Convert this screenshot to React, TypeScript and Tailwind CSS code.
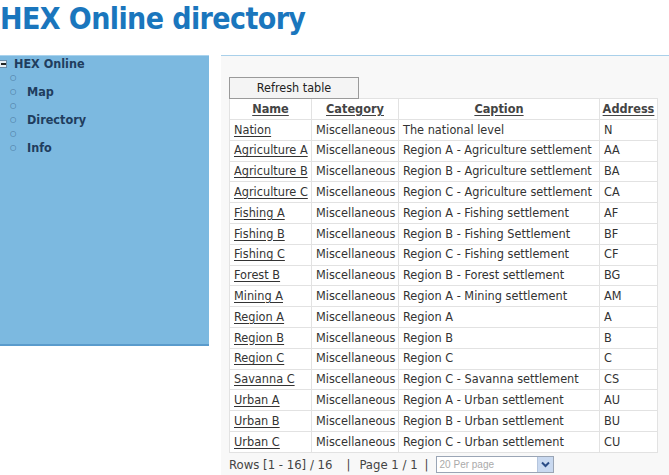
import React from "react";

const rows: [string, string, string][] = [
  ["Nation", "The national level", "N"],
  ["Agriculture A", "Region A - Agriculture settlement", "AA"],
  ["Agriculture B", "Region B - Agriculture settlement", "BA"],
  ["Agriculture C", "Region C - Agriculture settlement", "CA"],
  ["Fishing A", "Region A - Fishing settlement", "AF"],
  ["Fishing B", "Region B - Fishing Settlement", "BF"],
  ["Fishing C", "Region C - Fishing settlement", "CF"],
  ["Forest B", "Region B - Forest settlement", "BG"],
  ["Mining A", "Region A - Mining settlement", "AM"],
  ["Region A", "Region A", "A"],
  ["Region B", "Region B", "B"],
  ["Region C", "Region C", "C"],
  ["Savanna C", "Region C - Savanna settlement", "CS"],
  ["Urban A", "Region A - Urban settlement", "AU"],
  ["Urban B", "Region B - Urban settlement", "BU"],
  ["Urban C", "Region C - Urban settlement", "CU"],
];

function Bullet({ label }: { label?: string }) {
  return (
    <div className="flex items-center h-[14px]">
      <span className="w-[14px] ml-[10px] text-[8px] text-[#3d6a8f] leading-none">○</span>
      {label ? <span className="ml-[3px] text-[12.5px] font-bold text-[#1f3d5e]">{label}</span> : null}
    </div>
  );
}

export default function App() {
  return (
    <div className="w-[669px] h-[475px] bg-white overflow-hidden font-['DejaVu_Sans_Condensed','DejaVu_Sans',sans-serif] text-[#333]">
      <h1 className="h-[55px] pt-[4px] text-[30px] leading-[30px] font-bold text-[#1a76bd] tracking-[-0.6px]">
        HEX Online directory
      </h1>
      <div className="flex">
        <aside className="w-[209px] h-[291px] bg-[#7cb9e0] border-t border-[#a9d3ee] border-b-2 border-b-[#5a9bcc] pt-[1px]">
          <div className="flex items-center h-[14px]">
            <span className="w-[8px] h-[8px] -ml-[1px] bg-[#e8eef4] border border-[#6a8aa6] flex items-center justify-center">
              <span className="w-[5px] h-[1.5px] bg-[#222]"></span>
            </span>
            <span className="ml-[7px] text-[12.5px] font-bold text-[#1f3d5e]">HEX Online</span>
          </div>
          <Bullet />
          <Bullet label="Map" />
          <Bullet />
          <Bullet label="Directory" />
          <Bullet />
          <Bullet label="Info" />
        </aside>
        <main className="ml-[12px] flex-1 h-[420px] bg-[#f8f8f8] border-t border-[#a9d0ea] pl-[8px] pt-[19px]">
          <button className="w-[130px] h-[22px] bg-[#f4f4f4] border border-[#9a9a9a] text-[12.5px] text-[#222] leading-none">
            Refresh table
          </button>
          <table className="-mt-[1px] border-collapse bg-white text-[12.6px] text-[#333] w-[428px] table-fixed">
            <colgroup>
              <col className="w-[82px]" />
              <col className="w-[87px]" />
              <col className="w-[201px]" />
              <col className="w-[58px]" />
            </colgroup>
            <thead>
              <tr className="h-[20.8px]">
                {["Name", "Category", "Caption", "Address"].map((h) => (
                  <th key={h} className="border border-[#e2e2e2] font-bold text-[#444] underline underline-offset-2 text-center p-0 leading-none">
                    {h}
                  </th>
                ))}
              </tr>
            </thead>
            <tbody>
              {rows.map(([n, c, a]) => (
                <tr key={n} className="h-[20.8px]">
                  <td className="border border-[#e2e2e2] pl-[4px] p-0 leading-none whitespace-nowrap">
                    <span className="underline underline-offset-2">{n}</span>
                  </td>
                  <td className="border border-[#e2e2e2] pl-[4px] p-0 leading-none whitespace-nowrap">Miscellaneous</td>
                  <td className="border border-[#e2e2e2] pl-[4px] p-0 leading-none whitespace-nowrap">{c}</td>
                  <td className="border border-[#e2e2e2] pl-[4px] p-0 leading-none whitespace-nowrap">{a}</td>
                </tr>
              ))}
            </tbody>
          </table>
          <div className="flex items-center mt-[3px] text-[13px] text-[#444] h-[18px]">
            <span>Rows [1 - 16] / 16</span>
            <span className="ml-[14px] mr-[9px]">|</span>
            <span>Page 1 / 1</span>
            <span className="ml-[7px] mr-[7px]">|</span>
            <div className="w-[118px] h-[17px] border border-[#9aa5b5] bg-white flex items-center justify-between">
              <span className="pl-[3px] text-[10px] text-[#aaa] font-['Liberation_Sans',sans-serif]">20 Per page</span>
              <span className="w-[16px] h-[15px] bg-[#c9d9f0] border-l border-[#b5c5dd] flex items-center justify-center">
                <svg width="9" height="7" viewBox="0 0 9 7">
                  <path d="M1 1.5 L4.5 5 L8 1.5" stroke="#2a4c86" strokeWidth="2" fill="none" />
                </svg>
              </span>
            </div>
          </div>
        </main>
      </div>
    </div>
  );
}
